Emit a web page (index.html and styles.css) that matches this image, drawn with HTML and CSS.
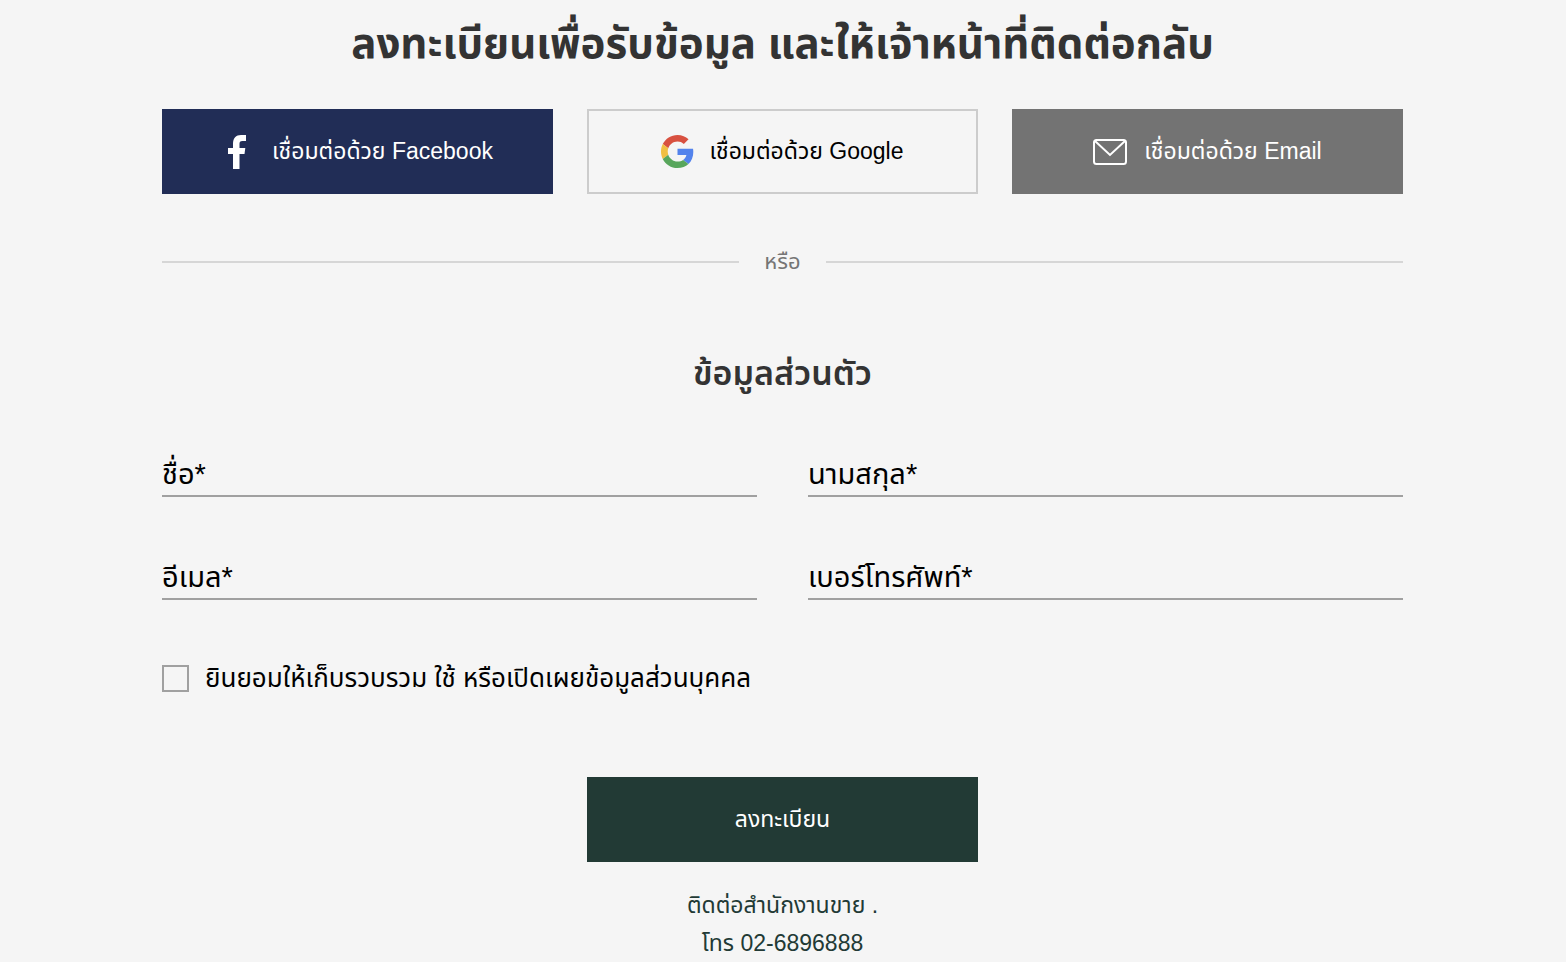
FILE: index.html
```html
<!DOCTYPE html>
<html lang="th">
<head>
<meta charset="utf-8">
<meta name="viewport" content="width=device-width, initial-scale=1">
<title>ลงทะเบียน</title>
<link rel="stylesheet" href="styles.css">
</head>
<body>
<main class="page">
  <h1 class="title">ลงทะเบียนเพื่อรับข้อมูล และให้เจ้าหน้าที่ติดต่อกลับ</h1>
  <div class="social">
    <button type="button" class="btn btn-facebook">
      <svg viewBox="0 0 18 34" width="18" height="34" aria-hidden="true"><path fill="#fff" d="M5 34V19H0v-6h5V9C5 3 8 0 13 0h5v6h-3.500C12 6 11.500 7 11.500 9v4h5.800l-.8 6h-5v15z"/></svg>
      <span>เชื่อมต่อด้วย Facebook</span>
    </button>
    <button type="button" class="btn btn-google">
      <svg viewBox="0 0 48 48" width="33" height="33" aria-hidden="true"><path fill="#D85140" d="M24 9.500c3.540 0 6.710 1.220 9.210 3.600l6.850-6.850C35.900 2.380 30.470 0 24 0 14.620 0 6.510 5.380 2.560 13.220l7.980 6.190C12.430 13.720 17.740 9.500 24 9.500z"/><path fill="#5383EC" d="M46.980 24.550c0-1.570-.15-3.090-.38-4.550H24v9.020h12.940c-.58 2.960-2.260 5.480-4.780 7.180l7.730 6c4.510-4.180 7.090-10.360 7.090-17.650z"/><path fill="#F1BF42" d="M10.530 28.590c-.48-1.450-.76-2.990-.76-4.590s.27-3.140.76-4.590l-7.980-6.190C.92 16.460 0 20.120 0 24c0 3.880.92 7.540 2.560 10.780l7.970-6.190z"/><path fill="#58A65C" d="M24 48c6.480 0 11.930-2.130 15.890-5.810l-7.730-6c-2.150 1.450-4.920 2.300-8.160 2.300-6.260 0-11.570-4.220-13.470-9.910l-7.980 6.190C6.510 42.620 14.620 48 24 48z"/></svg>
      <span>เชื่อมต่อด้วย Google</span>
    </button>
    <button type="button" class="btn btn-email">
      <svg viewBox="0 0 34 26" width="34" height="26" aria-hidden="true" fill="none" stroke="#fff" stroke-width="2"><rect x="1" y="1" width="32" height="24" rx="2.500"/><path d="M2 2l15 14L32 2"/></svg>
      <span>เชื่อมต่อด้วย Email</span>
    </button>
  </div>
  <div class="divider"><span>หรือ</span></div>
  <form class="form">
    <h2 class="subtitle">ข้อมูลส่วนตัว</h2>
    <div class="fields">
      <input class="field" type="text" placeholder="ชื่อ*" aria-label="ชื่อ">
      <input class="field" type="text" placeholder="นามสกุล*" aria-label="นามสกุล">
      <input class="field" type="email" placeholder="อีเมล*" aria-label="อีเมล">
      <input class="field" type="tel" placeholder="เบอร์โทรศัพท์*" aria-label="เบอร์โทรศัพท์">
    </div>
    <div class="consent">
      <input type="checkbox" id="consent" class="check">
      <label for="consent">ยินยอมให้เก็บรวบรวม ใช้ หรือเปิดเผยข้อมูลส่วนบุคคล</label>
    </div>
    <button type="submit" class="btn btn-submit">ลงทะเบียน</button>
  </form>
  <footer class="contact">
    <p>ติดต่อสำนักงานขาย .</p>
    <p>โทร 02-6896888</p>
  </footer>
</main>
</body>
</html>
```
FILE: styles.css
```css
* { box-sizing: border-box; }
body { margin: 0; background: #f5f5f5; color: #000; font-family: "Liberation Sans", "Noto Sans Thai", sans-serif; }
.page { margin: 0 163px 0 162px; }
.title { margin: 0; padding-top: 8px; font-size: 42px; line-height: 72px; color: #333; text-align: center; }
.social { display: grid; grid-template-columns: repeat(3, 1fr); gap: 34px; margin-top: 29px; }
.btn { display: flex; align-items: center; justify-content: center; height: 85px; padding: 0; border: 0; font-family: inherit; font-size: 23px; white-space: nowrap; color: #fff; cursor: pointer; }
.btn-facebook { gap: 26px; padding-left: 6px; background: #212d56; }
.btn-google { gap: 15px; background: transparent; border: 2px solid #ccc; color: #000; }
.btn-email { gap: 17px; background: #737373; }
.divider { display: flex; align-items: center; gap: 25px; margin-top: 48px; font-size: 22px; line-height: 40px; color: #757575; }
.divider::before, .divider::after { content: ""; flex: 1; height: 2px; background: #d6d6d6; }
.subtitle { margin: 65px 0 0; font-size: 34px; line-height: 52px; font-weight: 600; color: #333; text-align: center; }
.fields { display: grid; grid-template-columns: 1fr 1fr; gap: 51px; margin-top: 46px; }
.field { width: 100%; height: 52px; padding: 8px 0 0; border: 0; border-bottom: 2px solid #a0a0a0; border-radius: 0; background: transparent; font-family: inherit; font-size: 29px; color: #000; }
.field::placeholder { color: #000; opacity: 1; }
.consent { display: flex; align-items: center; gap: 16px; margin-top: 58px; font-size: 26px; line-height: 40px; }
.check { appearance: none; flex: none; width: 27px; height: 27px; margin: 0; border: 2px solid #a0a0a0; }
.check:checked { background: #223a35; }
.btn-submit { width: calc((100% - 68px) / 3); margin: 79px auto 0; background: #223a35; }
.contact { margin-top: 24px; font-size: 23px; line-height: 38px; text-align: center; color: #223a35; }
.contact p { margin: 0; }
```
